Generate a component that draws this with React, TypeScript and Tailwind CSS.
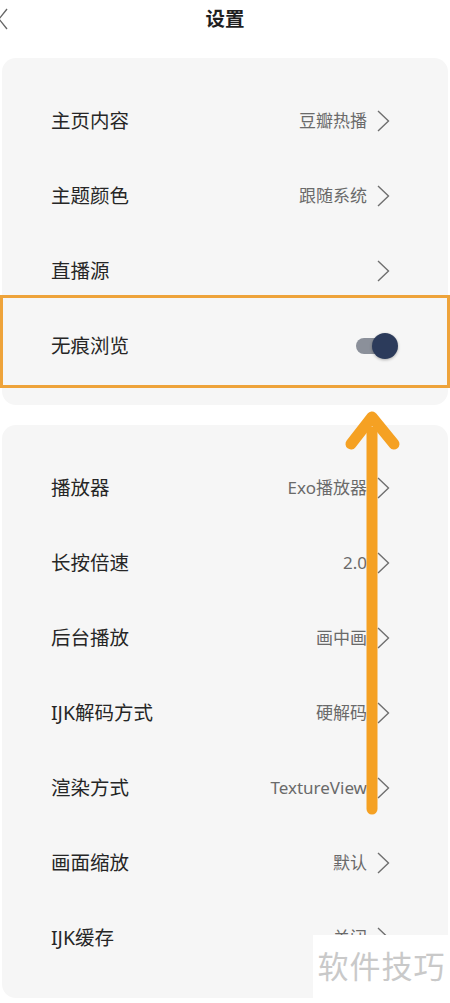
import React from "react";

type Row = { label: string; value?: string; toggle?: boolean };

const group1: Row[] = [
  { label: "主页内容", value: "豆瓣热播" },
  { label: "主题颜色", value: "跟随系统" },
  { label: "直播源", value: "" },
  { label: "无痕浏览", toggle: true },
];

const group2: Row[] = [
  { label: "播放器", value: "Exo播放器" },
  { label: "长按倍速", value: "2.0" },
  { label: "后台播放", value: "画中画" },
  { label: "IJK解码方式", value: "硬解码" },
  { label: "渲染方式", value: "TextureView" },
  { label: "画面缩放", value: "默认" },
  { label: "IJK缓存", value: "关闭" },
];

function Chevron() {
  return (
    <svg width="13" height="22" viewBox="0 0 13 22" className="shrink-0">
      <polyline points="1,1 11.5,11 1,21" fill="none" stroke="#6f6f6f" strokeWidth="1.4" />
    </svg>
  );
}

function Toggle() {
  return (
    <div className="relative w-[42px] h-[26px] mr-[-8px] flex items-center">
      <div className="w-[30px] h-[16px] rounded-full bg-[#8b909a]" />
      <div className="absolute right-0 top-0 w-[26px] h-[26px] rounded-full bg-[#2c3b5b] shadow-[0_1px_3px_rgba(0,0,0,0.3)]" />
    </div>
  );
}

function SettingRow({ row }: { row: Row }) {
  return (
    <div className="h-[75px] flex items-center justify-between pl-[49px] pr-[58px]">
      <span className="text-[19.5px] text-[#262626]">{row.label}</span>
      {row.toggle ? (
        <Toggle />
      ) : (
        <div className="flex items-center gap-[10px]">
          {row.value ? <span className="text-[17px] text-[#6a6a6a]">{row.value}</span> : null}
          <Chevron />
        </div>
      )}
    </div>
  );
}

export default function App() {
  return (
    <div
      className="relative w-[450px] h-[1003px] bg-white overflow-hidden"
      style={{ fontFamily: '"Noto Sans", "Noto Sans CJK SC", sans-serif' }}
    >
      {/* header */}
      <div className="relative h-[40px] flex items-center justify-center">
        <svg width="10" height="22" viewBox="0 0 10 22" className="absolute left-[-2px] top-[8px]">
          <polyline points="9,1 1,11 9,21" fill="none" stroke="#666" strokeWidth="1.4" />
        </svg>
        <span className="text-[19.5px] font-bold text-[#1f1f1f] mt-[-2px]">设置</span>
      </div>

      <div className="mt-[18px] mx-[2px] rounded-[14px] bg-[#f6f6f6] pt-[25px] pb-[22px]">
        {group1.map((r) => (
          <SettingRow key={r.label} row={r} />
        ))}
      </div>

      <div className="mt-[20px] mx-[2px] rounded-[14px] bg-[#f6f6f6] pt-[25px] pb-[23px]">
        {group2.map((r) => (
          <SettingRow key={r.label} row={r} />
        ))}
      </div>

      {/* highlight box */}
      <div className="absolute left-0 top-[295px] w-[450px] h-[93px] border-[3px] border-[#eea33a] pointer-events-none" />

      {/* arrow */}
      <svg width="450" height="1003" className="absolute left-0 top-0 pointer-events-none">
        <path d="M372 432 L372 809" stroke="#f5a123" strokeWidth="11" strokeLinecap="round" fill="none" />
        <path
          d="M351 444 L372 417 L394 444"
          stroke="#f5a123"
          strokeWidth="11"
          strokeLinecap="round"
          strokeLinejoin="round"
          fill="none"
        />
      </svg>

      {/* watermark */}
      <div className="absolute left-[313px] top-[935px] w-[137px] h-[68px] bg-white flex items-center justify-center">
        <span className="text-[31px] text-[#c9c9c9] tracking-[1px] mt-[-6px]">软件技巧</span>
      </div>
    </div>
  );
}
